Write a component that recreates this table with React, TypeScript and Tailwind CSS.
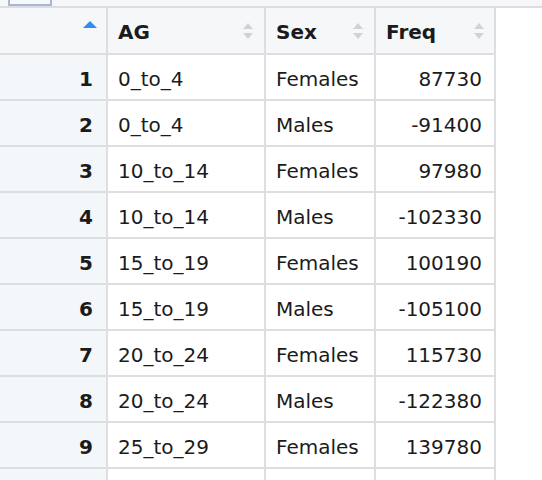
import React from "react"

interface Row {
  ag: string
  sex: string
  freq: number
}

const rows: Row[] = [
  { ag: "0_to_4", sex: "Females", freq: 87730 },
  { ag: "0_to_4", sex: "Males", freq: -91400 },
  { ag: "10_to_14", sex: "Females", freq: 97980 },
  { ag: "10_to_14", sex: "Males", freq: -102330 },
  { ag: "15_to_19", sex: "Females", freq: 100190 },
  { ag: "15_to_19", sex: "Males", freq: -105100 },
  { ag: "20_to_24", sex: "Females", freq: 115730 },
  { ag: "20_to_24", sex: "Males", freq: -122380 },
  { ag: "25_to_29", sex: "Females", freq: 139780 },
]

function SortBoth() {
  return (
    <svg width="12" height="18" viewBox="0 0 12 18" className="shrink-0">
      <path d="M6 1 L11 7 L1 7 Z" fill="#cfd3d7" />
      <path d="M1 11 L11 11 L6 17 Z" fill="#cfd3d7" />
    </svg>
  )
}

function SortUp() {
  return (
    <svg width="14" height="7" viewBox="0 0 14 7" className="shrink-0">
      <path d="M7 0 L14 7 L0 7 Z" fill="#2e8ee9" />
    </svg>
  )
}

export default function App() {
  return (
    <div
      className="w-[542px] h-[480px] overflow-hidden bg-white text-[#1b1b1b]"
      style={{ fontFamily: '"DejaVu Sans", sans-serif' }}
    >
      {/* toolbar strip */}
      <div className="h-[8px] bg-[#f5f6f8] border-b-2 border-[#dcdee1] pl-[8px]">
        <div className="w-[44px] h-[6px] border-2 border-t-0 border-[#a6b6d3] bg-[#f7f8fa]" />
      </div>

      <div className="w-[496px]">
        {/* header */}
        <div className="flex h-[47px] bg-[#f6f7f9] border-b-2 border-[#dcdee1] text-[20px] font-bold">
          <div className="w-[108px] border-r-2 border-[#dcdee1] flex justify-end items-start pt-[13px] pr-[9px]">
            <SortUp />
          </div>
          <div className="w-[158px] border-r-2 border-[#dcdee1] flex items-center justify-between pl-[10px] pr-[10px] pt-[3px]">
            <span>AG</span>
            <div className="-mt-[3px]"><SortBoth /></div>
          </div>
          <div className="w-[110px] border-r-2 border-[#dcdee1] flex items-center justify-between pl-[10px] pr-[10px] pt-[3px]">
            <span>Sex</span>
            <div className="-mt-[3px]"><SortBoth /></div>
          </div>
          <div className="w-[120px] border-r-2 border-[#dcdee1] flex items-center justify-between pl-[10px] pr-[9px] pt-[3px]">
            <span>Freq</span>
            <div className="-mt-[3px]"><SortBoth /></div>
          </div>
        </div>

        {rows.map((r, i) => (
          <div key={i} className="flex h-[46px] border-b-2 border-[#dcdee1] text-[20px]">
            <div className="w-[108px] bg-[#f4f7f9] border-r-2 border-[#dcdee1] flex items-center justify-end pr-[13px] pt-[4px] font-bold">
              {i + 1}
            </div>
            <div className="w-[158px] border-r-2 border-[#dcdee1] flex items-center pl-[10px] pt-[4px]">
              {r.ag}
            </div>
            <div className="w-[110px] border-r-2 border-[#dcdee1] flex items-center pl-[10px] pt-[4px]">
              {r.sex}
            </div>
            <div className="w-[120px] border-r-2 border-[#dcdee1] flex items-center justify-end pr-[12px] pt-[4px]">
              {r.freq}
            </div>
          </div>
        ))}

        {/* next row, scrolled below the fold */}
        <div className="flex h-[46px]">
          <div className="w-[108px] bg-[#f4f7f9] border-r-2 border-[#dcdee1]" />
          <div className="w-[158px] border-r-2 border-[#dcdee1]" />
          <div className="w-[110px] border-r-2 border-[#dcdee1]" />
          <div className="w-[120px] border-r-2 border-[#dcdee1]" />
        </div>
      </div>
    </div>
  )
}
